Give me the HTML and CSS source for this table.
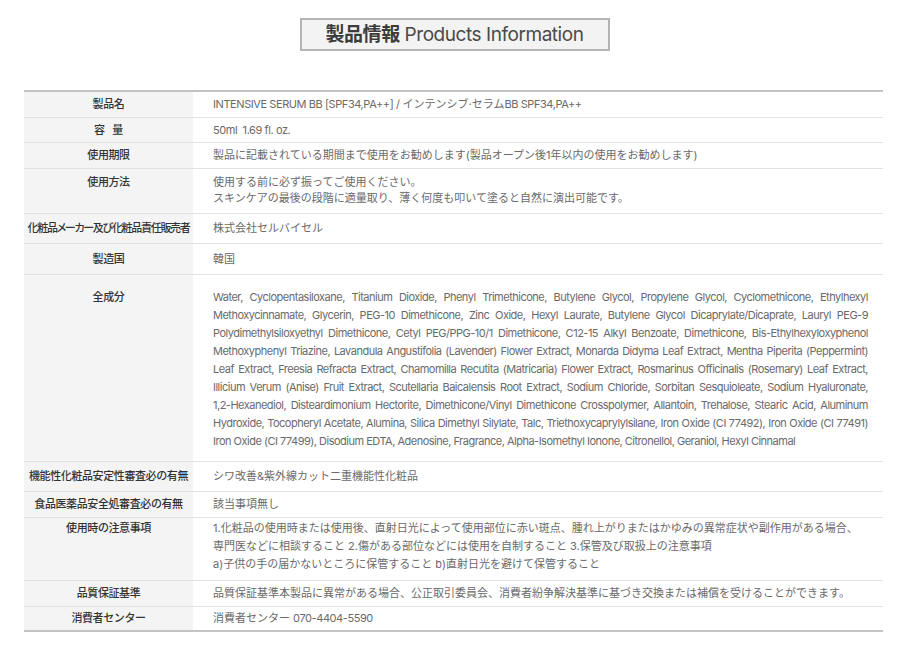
FILE: index.html
```html
<!DOCTYPE html>
<html lang="ja">
<head>
<meta charset="utf-8">
<title>製品情報 Products Information</title>
<link rel="stylesheet" href="styles.css">
</head>
<body>
<div class="page">
  <div class="title-wrap">
    <h2 class="title"><strong>製品情報</strong> Products Information</h2>
  </div>
  <table class="info">
    <tbody>
      <tr class="r1"><th>製品名</th><td><span class="en">INTENSIVE SERUM BB [SPF34,PA++] /</span> インテンシブ·セラム<span class="en">BB SPF34,PA++</span></td></tr>
      <tr class="r2"><th>容&nbsp;&nbsp;&nbsp;量</th><td><span class="en">50ml&nbsp; 1.69 fl. oz.</span></td></tr>
      <tr class="r3"><th>使用期限</th><td>製品に記載されている期間まで使用をお勧めします(製品オープン後1年以内の使用をお勧めします)</td></tr>
      <tr class="r4 multi"><th>使用方法</th><td>使用する前に必ず振ってご使用ください。<br>スキンケアの最後の段階に適量取り、薄く何度も叩いて塗ると自然に演出可能です。</td></tr>
      <tr class="r5"><th class="tight">化粧品メーカー及び化粧品責任販売者</th><td>株式会社セルバイセル</td></tr>
      <tr class="r6"><th>製造国</th><td>韓国</td></tr>
      <tr class="r7 multi"><th>全成分</th><td class="just ing">Water, Cyclopentasiloxane, Titanium Dioxide, Phenyl Trimethicone, Butylene Glycol, Propylene Glycol, Cyclomethicone, Ethylhexyl Methoxycinnamate, Glycerin, PEG-10 Dimethicone, Zinc Oxide, Hexyl Laurate, Butylene Glycol Dicaprylate/Dicaprate, Lauryl PEG-9 Polydimethylsiloxyethyl Dimethicone, Cetyl PEG/PPG-10/1 Dimethicone, C12-15 Alkyl Benzoate, Dimethicone, Bis-Ethylhexyloxyphenol Methoxyphenyl Triazine, Lavandula Angustifolia (Lavender) Flower Extract, Monarda Didyma Leaf Extract, Mentha Piperita (Peppermint) Leaf Extract, Freesia Refracta Extract, Chamomilla Recutita (Matricaria) Flower Extract, Rosmarinus Officinalis (Rosemary) Leaf Extract, Illicium Verum (Anise) Fruit Extract, Scutellaria Baicalensis Root Extract, Sodium Chloride, Sorbitan Sesquioleate, Sodium Hyaluronate, <span class="nw">1,2-Hexanediol,</span> Disteardimonium Hectorite, Dimethicone/Vinyl Dimethicone Crosspolymer, Allantoin, Trehalose, Stearic Acid, Aluminum Hydroxide, Tocopheryl Acetate, Alumina, Silica Dimethyl Silylate, Talc, Triethoxycaprylylsilane, Iron Oxide (CI 77492), Iron Oxide (CI&nbsp;77491) Iron Oxide (CI 77499), Disodium EDTA, Adenosine, Fragrance, Alpha-Isomethyl Ionone, Citronellol, Geraniol, Hexyl Cinnamal</td></tr>
      <tr class="r8"><th>機能性化粧品安定性審査必の有無</th><td>シワ改善&amp;紫外線カット二重機能性化粧品</td></tr>
      <tr class="r9"><th>食品医薬品安全処審査必の有無</th><td>該当事項無し</td></tr>
      <tr class="r10 multi"><th>使用時の注意事項</th><td>1.化粧品の使用時または使用後、直射日光によって使用部位に赤い斑点、腫れ上がりまたはかゆみの異常症状や副作用がある場合、<br>専門医などに相談すること 2.傷がある部位などには使用を自制すること 3.保管及び取扱上の注意事項<br>a)子供の手の届かないところに保管すること b)直射日光を避けて保管すること</td></tr>
      <tr class="r11"><th>品質保証基準</th><td>品質保証基準本製品に異常がある場合、公正取引委員会、消費者紛争解決基準に基づき交換または補償を受けることができます。</td></tr>
      <tr class="r12"><th>消費者センター</th><td>消費者センター <span class="en">070-4404-5590</span></td></tr>
    </tbody>
  </table>
</div>
</body>
</html>
```

FILE: styles.css
```css
* { box-sizing: border-box; }
html, body { margin: 0; padding: 0; background: #fff; }
body {
  font-family: Inter, "Noto Sans CJK JP", sans-serif;
  color: #666;
}
.page {
  padding: 18px 26px 0 24px;
}
.title-wrap {
  display: flex;
  justify-content: center;
  padding-left: 2px;
}
.title {
  margin: 0;
  width: 310px;
  height: 33px;
  border: 2px solid #b4b4b4;
  background: #f3f3f3;
  font-size: 19px;
  font-weight: 400;
  line-height: 29px;
  text-align: center;
  color: #4a4a4a;
  letter-spacing: -0.45px;
}
.title strong {
  font-weight: 700;
  color: #3c3c3c;
}
.info {
  margin-top: 39px;
  width: 859px;
  border-collapse: collapse;
  border-top: 2px solid #c4c4c4;
  border-bottom: 2px solid #c4c4c4;
  font-size: 11px;
}
.info th, .info td {
  border-bottom: 1px solid #e2e2e2;
  line-height: 18px;
  padding: 0;
  vertical-align: middle;
}
.info th {
  width: 169px;
  background: #f4f4f4;
  color: #333;
  font-weight: 500;
  text-align: center;
  letter-spacing: -0.4px;
  white-space: nowrap;
}
.info th.tight {
  letter-spacing: -1.3px;
  font-feature-settings: "palt";
}
.info td {
  padding-left: 20px;
  padding-right: 15px;
  color: #6a6a6a;
}
.info .en { letter-spacing: -0.42px; }
.info .ing { letter-spacing: -0.5px; }
.info .nw { white-space: nowrap; }
.info .multi th, .info .multi td { vertical-align: top; }
.info td.just { text-align: justify; }

.r1 { height: 26px; }
.r2 { height: 25px; }
.r3 { height: 26px; }
.r4 { height: 45px; }
.r4 th, .r4 td { padding-top: 5px; line-height: 16px; }
.r5 { height: 30px; }
.r6 { height: 31px; }
.r7 { height: 187px; }
.r7 th, .r7 td { padding-top: 13px; }
.r8 { height: 30px; }
.r9 { height: 26px; }
.r10 { height: 63px; }
.r10 th, .r10 td { padding-top: 1px; }
.r11 { height: 26px; }
.r12 { height: 25px; }
```
